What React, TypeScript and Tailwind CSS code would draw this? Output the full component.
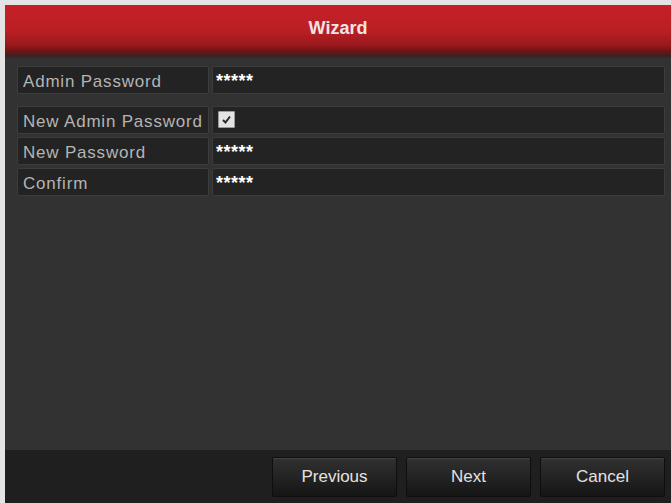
import React from "react";

const font = { fontFamily: '"Liberation Sans", Arial, sans-serif' };

function Stars() {
  return <span className="text-[18px] font-bold text-white tracking-[0.5px]">*****</span>;
}

function Row({ label, children, className = "" }: { label: string; children: React.ReactNode; className?: string }) {
  return (
    <div className={`flex h-[28px] gap-[3px] ${className}`}>
      <div className="w-[192px] shrink-0 bg-[#232323] border border-[#3c3c3c] rounded-[2px] pl-[5px] pt-[2px] flex items-center text-[17px] tracking-[0.8px] text-[#b4b4b4] leading-none whitespace-nowrap">
        {label}
      </div>
      <div className="flex-1 bg-[#232323] border border-[#3c3c3c] rounded-[2px] pl-[3px] flex items-start pt-[5px] leading-none">
        {children}
      </div>
    </div>
  );
}

function Btn({ children }: { children: React.ReactNode }) {
  return (
    <div className="w-[125px] h-[40px] flex items-center justify-center text-[17px] text-[#e2e2e2] bg-[linear-gradient(to_bottom,#303030_0%,#252525_45%,#151515_100%)] border border-[#0e0e0e] shadow-[inset_0_1px_0_#444444] rounded-[2px]">
      {children}
    </div>
  );
}

export default function App() {
  return (
    <div style={font} className="w-[671px] h-[503px] bg-[#e4e4e4] pl-[5px] pt-[5px] flex overflow-hidden">
      <div className="flex-1 flex flex-col bg-[#323232]">
        <div className="h-[53px] shrink-0 flex items-start justify-center pt-[14px] bg-[linear-gradient(to_bottom,#c42027_0px,#bb1f25_25px,#9a191d_40px,#701315_46px,#382222_51px,#303030_53px)]">
          <span className="text-[18px] font-bold text-[#f1e4e4] leading-none">Wizard</span>
        </div>
        <div className="flex-1 pl-[12px] pr-[6px] pt-[8px] flex flex-col">
          <Row label="Admin Password">
            <Stars />
          </Row>
          <Row label="New Admin Password" className="mt-[12px]">
            <div className="w-[17px] h-[17px] mt-[-1px] ml-[2px] bg-[#e3e3e3] border border-[#9a9a9a] rounded-[1px] flex items-center justify-center">
              <svg width="11" height="11" viewBox="0 0 11 11">
                <path d="M2 6 L4.5 8.5 L9 2.5" fill="none" stroke="#2a2a2a" strokeWidth="2" />
              </svg>
            </div>
          </Row>
          <Row label="New Password" className="mt-[3px]">
            <Stars />
          </Row>
          <Row label="Confirm" className="mt-[3px]">
            <Stars />
          </Row>
        </div>
        <div className="h-[53px] shrink-0 bg-[#1f1f1f] flex justify-end items-start pt-[7px] pr-[6px] gap-[9px]">
          <Btn>Previous</Btn>
          <Btn>Next</Btn>
          <Btn>Cancel</Btn>
        </div>
      </div>
    </div>
  );
}
